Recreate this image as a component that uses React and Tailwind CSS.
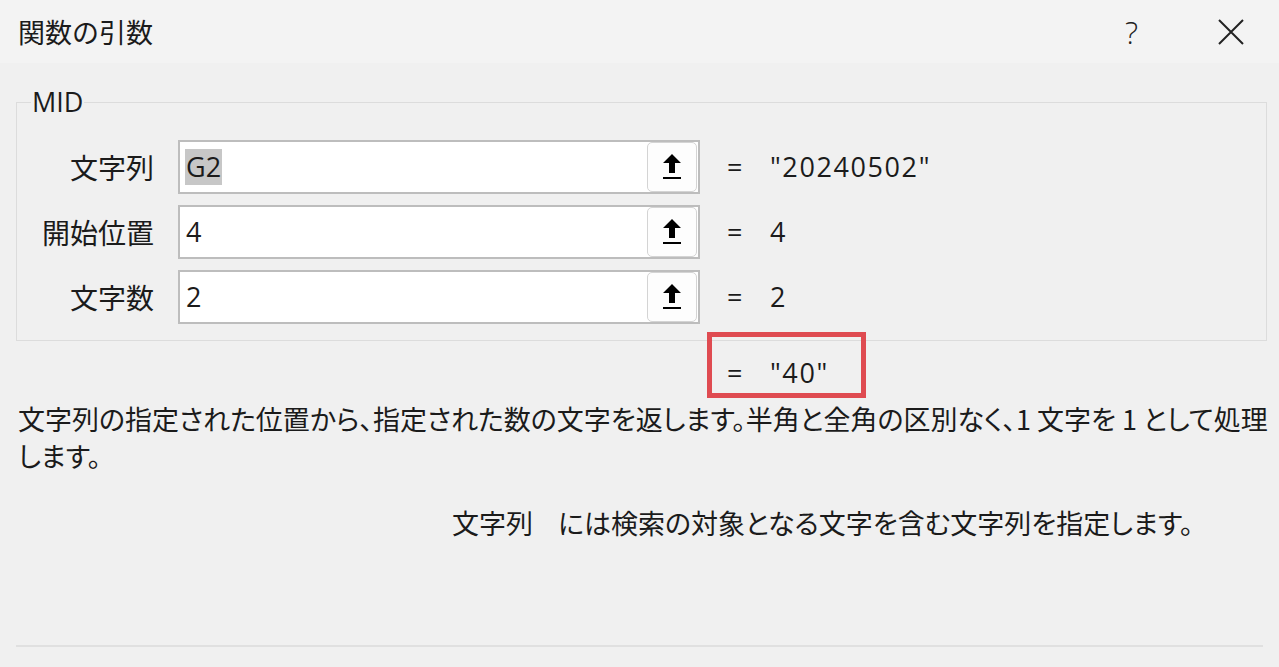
import React from 'react';

const args = [
  { label: '文字列', value: 'G2', result: '"20240502"', selected: true },
  { label: '開始位置', value: '4', result: '4' },
  { label: '文字数', value: '2', result: '2' },
];

// Excel's "collapse dialog" button glyph
const CollapseIcon = () => (
  <svg width="22" height="30" viewBox="0 0 22 30">
    <path d="M11 2 L20 11 L14 11 L14 21 L8 21 L8 11 L2 11 Z" fill="#000" />
    <rect x="2" y="25" width="18" height="2" fill="#000" />
  </svg>
);

const ArgRow = ({ label, value, result, selected }) => (
  <div className="flex items-center h-[54px]">
    <div className="w-[137px] text-right text-[28px] leading-[38px] [font-family:'Noto_Sans_CJK_JP',sans-serif]">
      {label}
    </div>
    <div className="ml-[24px] w-[522px] h-[54px] bg-white border-2 border-[#bdbdbd] flex items-center justify-between pl-[5px] pr-[1px]">
      <span className={`text-[27px] leading-[36px] px-[1px] ${selected ? 'bg-[#c7c7c7]' : ''}`}>{value}</span>
      <button className="w-[50px] h-[50px] rounded-[5px] border border-[#d4d4d4] bg-[#fdfdfd] flex items-center justify-center">
        <CollapseIcon />
      </button>
    </div>
    <div className="ml-[27px] text-[27px] leading-[38px] flex">
      <span className="w-[43px]">=</span>
      <span className="tracking-[1.6px]">{result}</span>
    </div>
  </div>
);

const App = () => {
  return (
    <div className="w-[1279px] h-[667px] overflow-hidden bg-[#f0f0f0] text-[#1b1b1b] [font-family:'Open_Sans','Noto_Sans_CJK_JP',sans-serif]">
      {/* title bar */}
      <div className="h-[63px] bg-[#f3f3f3] flex items-center pl-[18px]">
        <div className="text-[27px] leading-[38px] [font-family:'Noto_Sans_CJK_JP',sans-serif]">関数の引数</div>
        <div className="ml-auto text-[31px] leading-[38px] font-light text-[#222] mr-[80px]">?</div>
        <svg width="26" height="26" viewBox="0 0 26 26" className="mr-[35px]">
          <path d="M1 1 L25 25 M25 1 L1 25" stroke="#222" strokeWidth="2" fill="none" />
        </svg>
      </div>

      {/* MID group */}
      <fieldset className="mt-[20px] mx-[16px] w-[1251px] border border-[#dcdcdc] pt-[19px] pb-[16px]">
        <legend className="ml-[14px] px-[1px] text-[27px] leading-[38px]">MID</legend>
        <div className="flex flex-col gap-[11px]">
          {args.map((a) => (
            <ArgRow key={a.label} {...a} />
          ))}
        </div>
      </fieldset>

      {/* result */}
      <div className="relative pt-[13px] pl-[727px] text-[27px] leading-[38px] flex">
        <span className="w-[43px]">=</span>
        <span className="tracking-[1.6px]">"40"</span>
        <span className="absolute left-[707px] top-[-9px] w-[159px] h-[66px] border-[5px] border-[#df4b51]" />
      </div>

      {/* description */}
      <div className="mt-[8px] ml-[18px] text-[27px] leading-[37px] [font-family:'Noto_Sans_CJK_JP',sans-serif] [font-feature-settings:'palt']">
        <div className="whitespace-nowrap">文字列の指定された位置から、指定された数の文字を返します。半角と全角の区別なく、1 文字を 1 として処理</div>
        <div className="whitespace-nowrap">します。</div>
      </div>

      <div className="mt-[30px] ml-[452px] text-[27px] leading-[37px] whitespace-nowrap [font-family:'Noto_Sans_CJK_JP',sans-serif] [font-feature-settings:'palt']">
        文字列<span className="inline-block w-[25px]" />には検索の対象となる文字を含む文字列を指定します。
      </div>

      <div className="mt-[104px] mx-[16px] border-t-2 border-[#e0e0e0]" />
    </div>
  );
};

export default App;
